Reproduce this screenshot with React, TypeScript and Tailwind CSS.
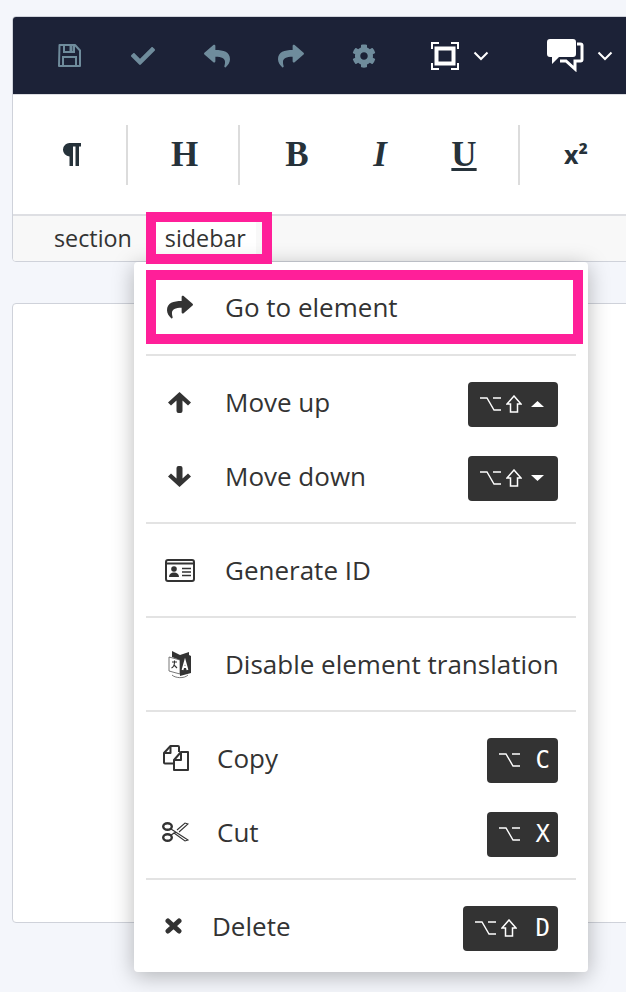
import React from "react";
import { FaCheck, FaReply, FaShare, FaCog } from "react-icons/fa";

const sans = "font-['Open_Sans',sans-serif]";

function Chevron() {
  return (
    <svg width="16" height="10" viewBox="0 0 16 10" fill="none" stroke="#fff" strokeWidth="2">
      <path d="M1.500 1.500 8 8l6.500-6.500" />
    </svg>
  );
}

function SaveIcon() {
  return (
    <svg width="23" height="23" viewBox="0 0 23 23" fill="none" stroke="currentColor" strokeWidth="2">
      <path d="M1.500 1h15.500l5 5.500V22H1z" strokeLinejoin="round" />
      <path d="M6 1v7h10V1" />
      <path d="M5 22v-9h13v9" />
      <path d="M11.500 2h3v5h-3z" fill="currentColor" stroke="none" />
    </svg>
  );
}

function FullscreenIcon() {
  return (
    <svg width="30" height="30" viewBox="0 0 30 30" fill="none" stroke="#fff">
      <path strokeWidth="2" d="M9 2H2v6M21 2h7v6M9 28H2v-6M21 28h7v-6" />
      <rect x="6.500" y="7.500" width="17" height="15" strokeWidth="4" />
    </svg>
  );
}

function CommentsIcon() {
  return (
    <svg width="37" height="33" viewBox="0 0 37 33">
      <path fill="#fff" d="M3 0h23a3 3 0 0 1 3 3v12a3 3 0 0 1-3 3H12l-7 7v-7H3a3 3 0 0 1-3-3V3a3 3 0 0 1 3-3z" />
      <path fill="none" stroke="#fff" strokeWidth="3" d="M30 5h3.500a1.500 1.500 0 0 1 1.500 1.500v14a1.500 1.500 0 0 1-1.500 1.500H28v8l-9-8h-6" />
    </svg>
  );
}

function ParagraphIcon() {
  return (
    <svg width="18" height="23" viewBox="0 0 18 23" fill="currentColor">
      <path d="M7 0h11v3.500h-2V23h-3.500V3.500H10V23H6.500V13.500A6.750 6.750 0 0 1 7 0z" />
    </svg>
  );
}

function ArrowIcon({ down }: { down?: boolean }) {
  return (
    <svg width="23" height="21" viewBox="0 0 23 21" fill="#333" className={down ? "rotate-180" : ""}>
      <path d="M11.500 0 23 10.500l-3 3-5.500-5V19a2 2 0 0 1-2 2h-2a2 2 0 0 1-2-2V8.500l-5.500 5-3-3z" />
    </svg>
  );
}

function IdCardIcon() {
  return (
    <svg width="30" height="23" viewBox="0 0 30 23" fill="none" stroke="#333">
      <rect x="1" y="1" width="28" height="21" rx="2" strokeWidth="2" />
      <path strokeWidth="2" d="M1 4.500h28" />
      <circle cx="9" cy="10" r="2.800" fill="#333" stroke="none" />
      <path fill="#333" stroke="none" d="M4 18c0-3 2-4.500 5-4.500s5 1.500 5 4.500z" />
      <path strokeWidth="1.600" d="M17 9.500h9M17 13h9M17 16.500h9" />
    </svg>
  );
}

function CopyIcon() {
  return (
    <svg width="26" height="26" viewBox="0 0 26 26" fill="none" stroke="#333" strokeWidth="2" strokeLinejoin="round">
      <path d="M10 18.500H2a1 1 0 0 1-1-1V8l6.500-7H15a1 1 0 0 1 1 1v5" />
      <path d="M1 8h6.500V1" />
      <path d="M11 15l7-8h7v18H11z" fill="#fff" />
      <path d="M11 15h7V7" />
    </svg>
  );
}

function ScissorsIcon() {
  return (
    <svg width="27" height="20" viewBox="0 0 27 20" fill="none" stroke="#333" strokeWidth="2.400">
      <ellipse cx="5.500" cy="4.500" rx="4.300" ry="3.300" />
      <ellipse cx="5.500" cy="15.500" rx="4.300" ry="3.300" />
      <path strokeWidth="1.100" d="M9 7l17 11-3 1-11-8-2 1.500M9 13l5-3M15 8l8-7 3 1-9 8" />
    </svg>
  );
}

function TimesIcon() {
  return (
    <svg width="17" height="16" viewBox="0 0 17 16" fill="none" stroke="#333" strokeWidth="5" strokeLinecap="round">
      <path d="M3 3l11 10M14 3 3 13" />
    </svg>
  );
}

function TranslateIcon() {
  return (
    <svg width="24" height="29" viewBox="0 0 24 29" fill="none" stroke="#555" strokeWidth="0.800">
      <path d="M1 7l11 3v14L1 21z" />
      <path d="M4 25c3 3 12 4 16 0" />
      <path fill="#333" stroke="none" d="M4 1l8 4 9-3v3l2 1v17l-11 3V10L4 7z" />
      <path stroke="#fff" strokeWidth="1.800" d="M14.500 20l2.500-9 2.500 9M15.500 17h3.500" />
      <path stroke="#333" strokeWidth="1.100" d="M4 12h5M6.500 10.500V12c0 3-1 5-3 6M6 15l3 3" />
    </svg>
  );
}

function OptionIcon() {
  return (
    <svg width="21" height="14" viewBox="0 0 21 14" fill="none" stroke="#fff" strokeWidth="1.400">
      <path d="M0 1h7l7 12h7M13 1h8" />
    </svg>
  );
}

function ShiftIcon() {
  return (
    <svg width="16" height="18" viewBox="0 0 16 18" fill="none" stroke="#fff" strokeWidth="1.500">
      <path d="M8 1 15 9h-3.500v8h-7V9H1z" />
    </svg>
  );
}

function TriangleIcon({ down }: { down?: boolean }) {
  return (
    <svg width="13" height="6" viewBox="0 0 13 6" fill="#fff" className="ml-auto mr-[14px]">
      <path d={down ? "M0 0h13L6.500 6z" : "M6.500 0 13 6H0z"} />
    </svg>
  );
}

function Keys({ width, shift, children }: any) {
  return (
    <div className={`${width} h-[45px] shrink-0 rounded bg-[#333] text-white flex items-center pl-3 gap-[5px]`}>
      <OptionIcon />
      {shift && <ShiftIcon />}
      {children}
    </div>
  );
}

function KeyLetter({ children }: any) {
  return <span className="ml-auto mr-[8px] font-['DejaVu_Sans_Mono',monospace] text-[24px]">{children}</span>;
}

function MenuRow({ icon, iconClass, label, keys, lift = "mb-[4px]" }: any) {
  return (
    <div className="h-[74px] flex items-center pr-[30px]">
      <div className={`${iconClass} ${lift} flex items-center justify-center shrink-0 text-[#333]`}>{icon}</div>
      <span className={`${lift} flex-1 whitespace-nowrap text-[26px] text-[#333]`}>{label}</span>
      {keys}
    </div>
  );
}

function Divider({ className }: { className: string }) {
  return <div className={`${className} mx-3 h-[2px] bg-[#e3e3e3]`} />;
}

function ToolButton({ children }: any) {
  return <div className="w-[73.6px] flex items-center justify-center text-[#6f8c9c]">{children}</div>;
}

function FormatButton({ className, children }: any) {
  return <div className={`${className} flex items-center justify-center text-[#26323a]`}>{children}</div>;
}

export default function App() {
  const serif = "font-['Liberation_Serif',serif] text-[35px] leading-none font-bold";
  return (
    <div className={`${sans} relative h-[992px] w-[626px] overflow-hidden bg-[#f4f6fb] pt-4 pl-3`}>
      <div className="w-[700px] h-[246px] rounded-l border border-[#cfd2da] bg-white flex flex-col overflow-hidden">
        <div className="h-[77px] bg-[#1c2237] flex items-center pl-[20px] shrink-0">
          <ToolButton><SaveIcon /></ToolButton>
          <ToolButton><FaCheck size={24} /></ToolButton>
          <ToolButton><FaReply size={26} /></ToolButton>
          <ToolButton><FaShare size={26} /></ToolButton>
          <ToolButton><FaCog size={24} /></ToolButton>
          <div className="ml-[29px] flex items-center gap-[13px]">
            <FullscreenIcon />
            <Chevron />
          </div>
          <div className="ml-[58px] flex items-center gap-[13px]">
            <CommentsIcon />
            <Chevron />
          </div>
        </div>
        <div className="h-[122px] shrink-0 flex items-center border-t border-[#dcdde1] border-b-2 border-b-[#dedfe3]">
          <FormatButton className="w-[115px] h-[60px] pl-[4px] border-r-2 border-[#dcdcdc]">
            <ParagraphIcon />
          </FormatButton>
          <FormatButton className="w-[112px] h-[60px] pl-[3px] border-r-2 border-[#dcdcdc]">
            <span className={serif}>H</span>
          </FormatButton>
          <FormatButton className="ml-[32px] w-[50px]"><span className={serif}>B</span></FormatButton>
          <FormatButton className="ml-[33px] w-[50px]"><span className={`${serif} italic`}>I</span></FormatButton>
          <FormatButton className="ml-[34px] w-[50px]"><span className={`${serif} underline underline-offset-2`}>U</span></FormatButton>
          <div className="h-[60px] w-[2px] bg-[#dcdcdc] ml-[29px]" />
          <FormatButton className="w-[112px]">
            <span className="text-[25px] font-bold">x²</span>
          </FormatButton>
        </div>
        <div className="flex-1 bg-[#f8f8f8] flex items-center pl-[41px] text-[23.300px] text-[#333]">
          <span>section</span>
          <span className="ml-[23px] px-[10px] bg-white">sidebar</span>
        </div>
      </div>

      <div className="mt-[41px] w-[700px] h-[620px] rounded-l border border-[#cfd2da] bg-white" />

      <div className="absolute left-[134px] top-[262px] h-[710px] w-[454px] rounded bg-white pt-2 shadow-[0_4px_22px_rgba(0,0,0,0.28)]">
        <div className="relative">
          <div className="absolute left-3 right-[5px] top-0 h-[74px] border-[10px] border-[#ff1f99]" />
          <MenuRow icon={<FaShare size={26} />} iconClass="w-[91px]" label="Go to element" lift="" />
        </div>
        <Divider className="mt-[10px] mb-[11px]" />
        <MenuRow icon={<ArrowIcon />} iconClass="w-[91px]" label="Move up"
          keys={<Keys width="w-[90px]" shift><TriangleIcon /></Keys>} />
        <MenuRow icon={<ArrowIcon down />} iconClass="w-[91px]" label="Move down"
          keys={<Keys width="w-[90px]" shift><TriangleIcon down /></Keys>} />
        <Divider className="mt-[7px] mb-[11px]" />
        <MenuRow icon={<IdCardIcon />} iconClass="w-[91px]" label="Generate ID" />
        <Divider className="mt-[7px] mb-[11px]" />
        <MenuRow icon={<TranslateIcon />} iconClass="w-[91px]" label="Disable element translation" />
        <Divider className="mt-[7px] mb-[11px]" />
        <MenuRow icon={<CopyIcon />} iconClass="w-[83px]" label="Copy"
          keys={<Keys width="w-[71px]"><KeyLetter>C</KeyLetter></Keys>} />
        <MenuRow icon={<ScissorsIcon />} iconClass="w-[83px]" label="Cut"
          keys={<Keys width="w-[71px]"><KeyLetter>X</KeyLetter></Keys>} />
        <Divider className="mt-[7px] mb-[11px]" />
        <MenuRow icon={<TimesIcon />} iconClass="w-[78px]" label="Delete"
          keys={<Keys width="w-[95px]" shift><KeyLetter>D</KeyLetter></Keys>} />
      </div>

      <div className="absolute left-[146px] top-[212px] h-[52px] w-[126px] border-[10px] border-[#ff1f99]" />
    </div>
  );
}
